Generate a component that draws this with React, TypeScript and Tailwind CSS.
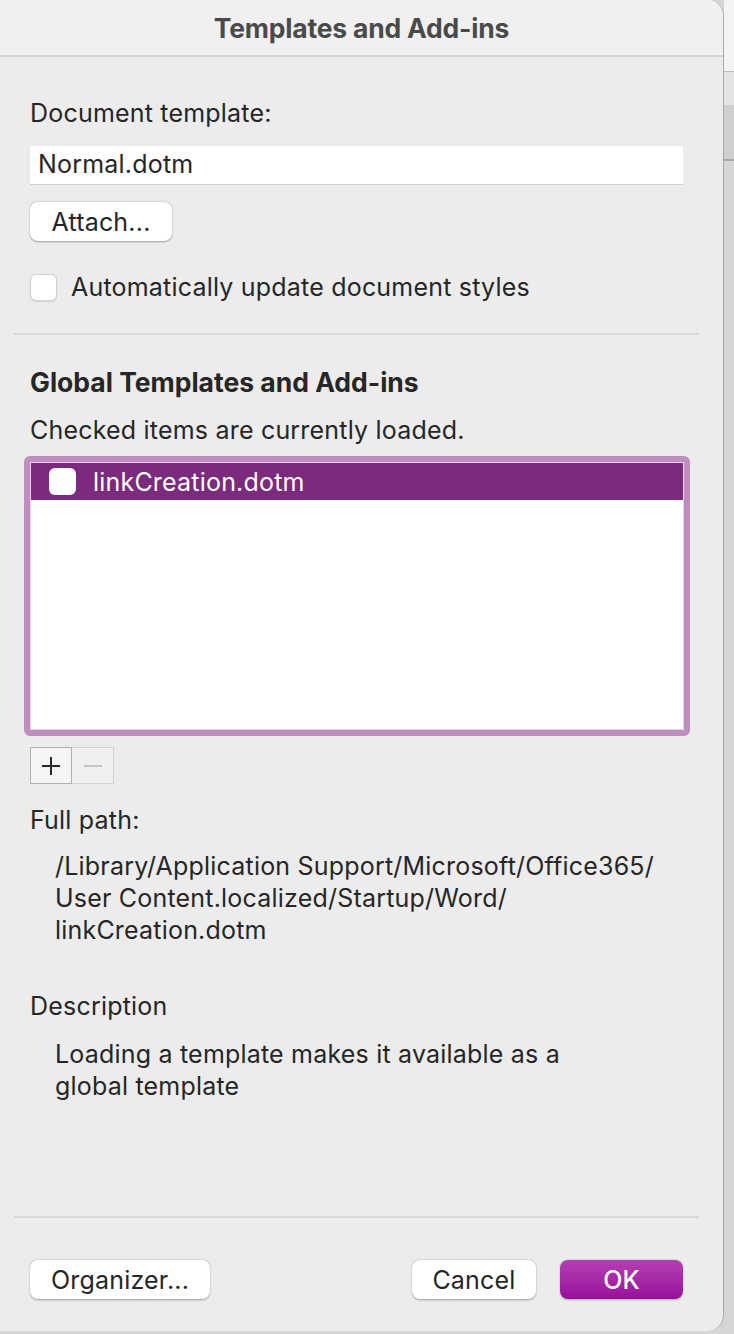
import React from "react";

const font = { fontFamily: "Inter, 'Liberation Sans', sans-serif" };

function MacButton({ label, className = "" }: { label: string; className?: string }) {
  return (
    <button
      className={`h-[39px] rounded-[8px] bg-white text-[25px] leading-[28px] tracking-[0.2px] text-[#262626] shadow-[0_0.5px_2px_rgba(0,0,0,0.35)] ${className}`}
    >
      {label}
    </button>
  );
}

export default function App() {
  return (
    <div className="flex h-[1334px] w-[734px] overflow-hidden bg-[#d6d6d6]" style={font}>
      <div className="flex h-[1331px] w-[724px] shrink-0 flex-col overflow-hidden rounded-r-[16px] border-r border-[#a9a9a9] bg-[#ececec]">
        <div className="flex h-[57px] shrink-0 items-center justify-center border-b-2 border-[#d3d3d3] bg-[#f0f0f0]">
          <span className="text-[26.5px] font-bold leading-[30px] tracking-[-0.2px] text-[#4a4a4a]">Templates and Add-ins</span>
        </div>

        <div className="flex flex-col px-[30px] text-[25px] tracking-[0.2px] text-[#262626]">
          <div className="mt-[42px] leading-[28px]">Document template:</div>
          <div className="mt-[19px] flex h-[39px] w-[653px] items-center border-b border-[#cfcfcf] bg-white pl-[8px] text-[#262626]">
            Normal.dotm
          </div>
          <MacButton label="Attach..." className="mt-[17px] w-[142px]" />
          <div className="mt-[32px] flex items-center gap-[14px]">
            <span className="h-[27px] w-[27px] rounded-[6px] border border-[#d0d0d0] bg-white shadow-[0_0.5px_1px_rgba(0,0,0,0.1)]" />
            <span className="leading-[28px]">Automatically update document styles</span>
          </div>
        </div>

        <div className="ml-[14px] mr-[24px] mt-[32px] h-[2px] bg-[#d8d8d8]" />

        <div className="flex flex-col px-[30px] text-[25px] tracking-[0.2px] text-[#262626]">
          <div className="mt-[33px] text-[26.5px] font-bold leading-[28px] tracking-[0px]">Global Templates and Add-ins</div>
          <div className="mt-[20px] leading-[28px]">Checked items are currently loaded.</div>
          <div className="-ml-[6px] mt-[12px] h-[280px] w-[666px] rounded-[6px] bg-[#bf8dbe] p-[6px]">
            <div className="h-full w-full border border-[#e8d4e8] bg-white">
              <div className="flex h-[37px] items-center gap-[17px] bg-[#7b2a7d] pl-[18px] text-white">
                <span className="h-[27px] w-[27px] rounded-[6px] bg-white" />
                <span className="leading-[28px]">linkCreation.dotm</span>
              </div>
            </div>
          </div>
          <div className="mt-[11px] flex">
            <div className="flex h-[37px] w-[42px] items-center justify-center border border-[#b1b1b1] bg-[#f5f5f5]">
              <svg width="22" height="22" viewBox="0 0 22 22">
                <path d="M11 2v18M2 11h18" stroke="#2a2a2a" strokeWidth="2" />
              </svg>
            </div>
            <div className="flex h-[37px] w-[42px] items-center justify-center border border-l-0 border-[#d3d3d3] bg-[#f0f0f0]">
              <svg width="22" height="22" viewBox="0 0 22 22">
                <path d="M2 11h18" stroke="#c4c4c4" strokeWidth="2" />
              </svg>
            </div>
          </div>
          <div className="mt-[20px] leading-[32px]">Full path:</div>
          <div className="mt-[14px] pl-[25px] leading-[32px]">
            /Library/Application Support/Microsoft/Office365/
            <br />
            User Content.localized/Startup/Word/
            <br />
            linkCreation.dotm
          </div>
          <div className="mt-[44px] leading-[32px]">Description</div>
          <div className="mt-[16px] pl-[25px] leading-[32px]">
            Loading a template makes it available as a
            <br />
            global template
          </div>
        </div>

        <div className="ml-[14px] mr-[24px] mt-[114px] h-[2px] bg-[#d8d8d8]" />

        <div className="mt-[42px] flex items-center px-[30px]">
          <MacButton label="Organizer..." className="w-[180px]" />
          <div className="flex-1" />
          <MacButton label="Cancel" className="w-[124px]" />
          <button className="ml-[24px] h-[39px] w-[123px] rounded-[8px] bg-gradient-to-b from-[#b43fb4] to-[#990c99] text-[25px] font-medium leading-[28px] text-white shadow-[0_0.5px_2px_rgba(0,0,0,0.3)]">
            OK
          </button>
          <div className="w-[10px]" />
        </div>
      </div>

      <div className="flex w-[10px] flex-col">
        <div className="h-[72px] border-b border-[#bdbdbd] bg-[#f3f3f3]" />
        <div className="h-[33px] bg-[#e4e4e4]" />
        <div className="h-[56px] border-b-2 border-[#a9a9a9] bg-[#cfcfcf]" />
        <div className="flex-1 bg-[#d6d6d6]" />
      </div>
    </div>
  );
}
